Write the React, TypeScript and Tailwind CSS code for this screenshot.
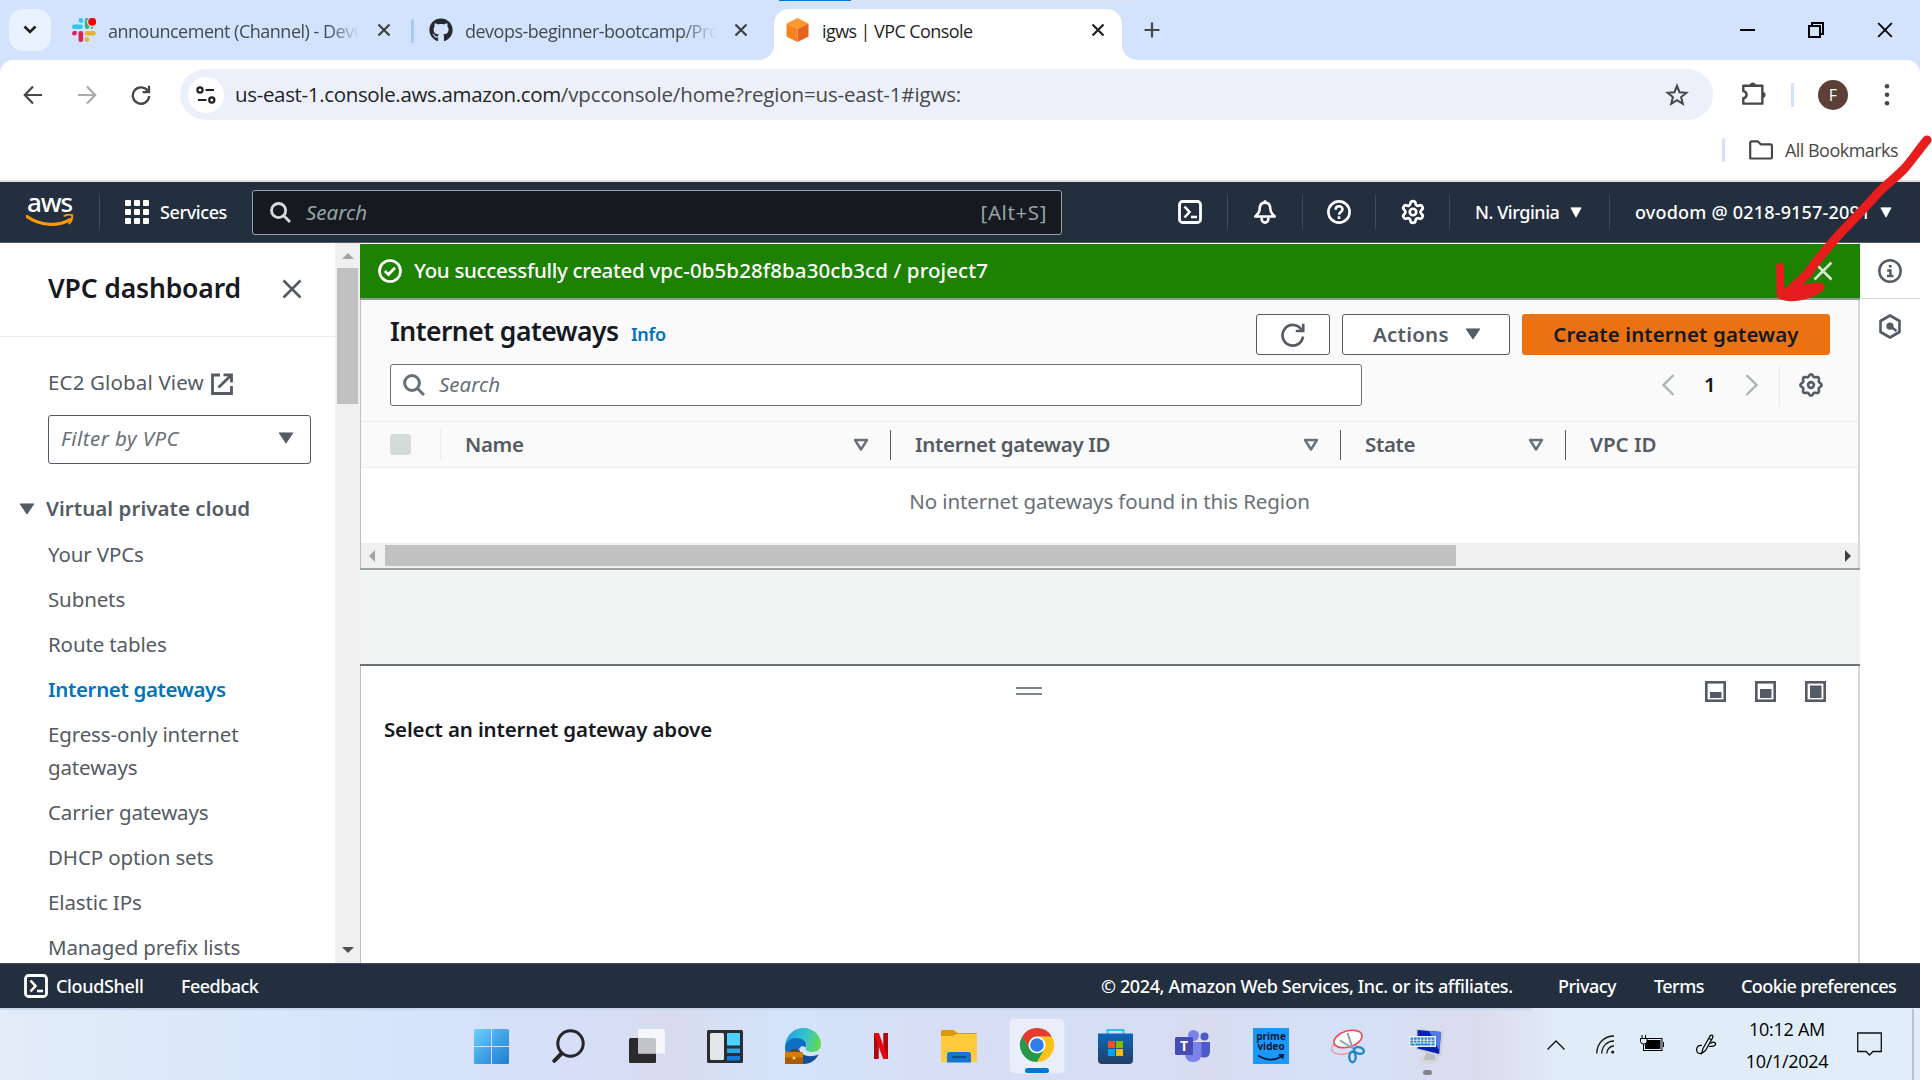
import React from "react";
import type { ReactNode } from "react";
import { FaGithub } from "react-icons/fa";
import { Settings } from "lucide-react";

/* ---------- small helpers ---------- */

function T({ c = "", children }: { c?: string; children: ReactNode }) {
  return <span className={"block shrink-0 whitespace-nowrap " + c}>{children}</span>;
}

function Caret({ c }: { c: string }) {
  return (
    <svg viewBox="0 0 16 13" className={"block shrink-0 " + c} preserveAspectRatio="none">
      <path d="M1.2 1h13.6L8 12z" fill="currentColor" stroke="currentColor" strokeWidth="1" strokeLinejoin="round" />
    </svg>
  );
}

function SortCaret() {
  return (
    <svg viewBox="0 0 16 14" className="h-[14px] w-4 shrink-0 text-[#687078]">
      <path d="M2 2h12L8 11.5z" fill="none" stroke="currentColor" strokeWidth="2.4" strokeLinejoin="round" />
    </svg>
  );
}

function Cross({ c, w = 2 }: { c: string; w?: number }) {
  return (
    <svg viewBox="0 0 20 20" className={"block shrink-0 " + c}>
      <path d="M1.5 1.5l17 17M18.5 1.5l-17 17" stroke="currentColor" strokeWidth={w} fill="none" />
    </svg>
  );
}

function Magnifier({ c }: { c: string }) {
  return (
    <svg viewBox="0 0 22 22" className={"block shrink-0 " + c}>
      <circle cx="9" cy="9" r="7.4" fill="none" stroke="currentColor" strokeWidth="3" />
      <path d="M14.5 14.5l6.5 6.5" stroke="currentColor" strokeWidth="3" />
    </svg>
  );
}

function ShellIcon() {
  return (
    <svg viewBox="0 0 24 24" className="block h-6 w-6 shrink-0 text-white" fill="none" stroke="currentColor">
      <rect x="1.5" y="1.5" width="21" height="21" rx="3" strokeWidth="2.8" />
      <path d="M6.5 6.5l5 5.5-5 5.5" strokeWidth="2.6" />
      <path d="M13 17h6" strokeWidth="2.6" />
    </svg>
  );
}

/* Eight-lobed preferences gear */
const GEAR_PATH =
  Array.from({ length: 96 }, (_, i) => {
    const a = (i / 96) * Math.PI * 2;
    const r = 9.5 + 1.1 * Math.cos(8 * a);
    return `${i ? "L" : "M"}${(12 + r * Math.cos(a)).toFixed(2)} ${(12 + r * Math.sin(a)).toFixed(2)}`;
  }).join("") + "Z";

function Gear({ c }: { c: string }) {
  return (
    <svg viewBox="0 0 24 24" className={"block h-6 w-6 shrink-0 " + c} fill="none" stroke="currentColor" strokeWidth="2.6" strokeLinejoin="round">
      <path d={GEAR_PATH} />
      <circle cx="12" cy="12" r="2.9" />
    </svg>
  );
}

/* ---------- browser chrome ---------- */

function SlackIcon() {
  return (
    <svg viewBox="0 0 24 24" className="block h-6 w-6 shrink-0">
      <g fill="#36c5f0">
        <rect x="0" y="6.5" width="11" height="4.6" rx="2.3" />
        <path d="M6.5 2.4a2.3 2.3 0 0 1 4.6 0v2.3H8.8a2.3 2.3 0 0 1-2.3-2.3z" />
      </g>
      <g fill="#2eb67d">
        <rect x="12.8" y="0" width="4.6" height="11" rx="2.3" />
        <path d="M19 11a2.3 2.3 0 1 0 0-4.6h0v4.6z" />
      </g>
      <g fill="#ecb22e">
        <rect x="12.8" y="13" width="11" height="4.6" rx="2.3" />
        <path d="M12.8 19.3h2.3a2.3 2.3 0 1 1-2.3 2.3z" />
      </g>
      <g fill="#e01e5a">
        <rect x="6.5" y="13" width="4.6" height="11" rx="2.3" />
        <path d="M4.7 13v2.3A2.3 2.3 0 1 1 2.4 13z" />
      </g>
      <circle cx="20" cy="4" r="5" fill="#d3e2fd" />
      <circle cx="20.2" cy="3.8" r="4" fill="#f70000" />
    </svg>
  );
}

function CubeIcon() {
  return (
    <svg viewBox="0 0 23 24" className="block h-6 w-[23px] shrink-0">
      <path d="M11.5 0L22.5 5.5 11.5 11 .5 5.5z" fill="#fd9a2b" />
      <path d="M.5 5.5l11 5.5v13L.5 18.5z" fill="#f6821f" />
      <path d="M22.5 5.5l-11 5.5v13l11-5.5z" fill="#ea6220" />
    </svg>
  );
}

function TabClose({ c }: { c: string }) {
  return (
    <svg viewBox="0 0 14 14" className={"block h-[14px] w-[14px] shrink-0 " + c}>
      <path d="M1.5 1.5l11 11M12.5 1.5l-11 11" stroke="currentColor" strokeWidth="2.2" />
    </svg>
  );
}

function TabStrip() {
  return (
    <div className="flex h-[60px] flex-col bg-[#d3e2fd] font-['Open_Sans',sans-serif]">
      <div className="flex h-px pl-[779px]">
        <div className="w-[72px] bg-[#0078d7]" />
        <div className="w-[290px] bg-[#e0e3e8]" />
      </div>
      <div className="flex h-[59px] pt-2">
        <div className="ml-[9px] flex h-[42px] w-[42px] items-center justify-center rounded-[14px] bg-[#e9f0fe]">
          <svg viewBox="0 0 14 10" className="h-[10px] w-[14px]">
            <path d="M1.5 1.5L7 7l5.5-5.5" fill="none" stroke="#1f1f1f" strokeWidth="2.6" />
          </svg>
        </div>
        <div className="ml-[21px] flex h-[42px] w-[320px] items-center">
          <SlackIcon />
          <div className="ml-3 w-[251px] overflow-hidden [mask-image:linear-gradient(to_right,#000_88%,transparent)]">
            <T c="text-[18px] tracking-[-0.5px] text-[#45494f] pt-[3px]">announcement (Channel) - DevOps</T>
          </div>
          <TabClose c="ml-[18px] text-[#3c4043]" />
        </div>
        <div className="ml-[19px] mt-[10px] h-6 w-[3px] rounded bg-[#a8c7fa]" />
        <div className="ml-[15px] flex h-[42px] w-[330px] items-center">
          <FaGithub className="h-6 w-6 shrink-0 text-[#24292f]" />
          <div className="ml-3 w-[251px] overflow-hidden [mask-image:linear-gradient(to_right,#000_86%,transparent)]">
            <T c="text-[18px] tracking-[-0.5px] text-[#45494f] pt-[3px]">devops-beginner-bootcamp/Project</T>
          </div>
          <TabClose c="ml-[18px] text-[#3c4043]" />
        </div>
        <div className="flex h-[51px] w-[15px] items-end bg-white">
          <div className="h-[51px] w-[15px] rounded-br-[15px] bg-[#d3e2fd]" />
        </div>
        <div className="flex h-[51px] w-[348px] rounded-t-[15px] bg-white pb-[9px] pl-[12px]">
          <div className="flex flex-1 items-center">
            <CubeIcon />
            <T c="ml-[13px] w-[269px] pt-[3px] text-[18px] tracking-[-0.58px] text-[#1f1f1f]">igws | VPC Console</T>
            <TabClose c="text-[#1f1f1f]" />
          </div>
        </div>
        <div className="h-[51px] w-[15px] bg-white">
          <div className="h-[51px] w-[15px] rounded-bl-[15px] bg-[#d3e2fd]" />
        </div>
        <div className="flex h-[42px] flex-1 items-center">
          <svg viewBox="0 0 16 16" className="ml-[7px] h-4 w-4">
            <path d="M8 .5v15M.5 8h15" stroke="#474747" strokeWidth="2.2" />
          </svg>
          <div className="ml-auto mr-[27px] flex items-center text-black">
            <div className="h-[2px] w-[15px] bg-black" />
            <svg viewBox="0 0 16 16" className="ml-[53px] h-4 w-4" fill="none" stroke="currentColor" strokeWidth="2">
              <path d="M4 3.5V1h11v11h-3" />
              <path d="M1 4h11v11H1z" />
            </svg>
            <Cross c="ml-[53px] h-4 w-4" w={2.3} />
          </div>
        </div>
      </div>
    </div>
  );
}

function Toolbar() {
  return (
    <div className="bg-[#d3e2fd]">
      <div className="flex h-[69px] items-center rounded-t-[13px] bg-white font-['Open_Sans',sans-serif]">
        <svg viewBox="0 0 20 20" className="ml-[23px] h-5 w-5" fill="none" stroke="#474747" strokeWidth="2.2">
          <path d="M10 1.5L1.8 10l8.2 8.5M1.8 10H19" />
        </svg>
        <svg viewBox="0 0 20 20" className="ml-[34px] h-5 w-5" fill="none" stroke="#ababab" strokeWidth="2.2">
          <path d="M10 1.5l8.2 8.5-8.2 8.5M18.2 10H1" />
        </svg>
        <svg viewBox="0 0 20 20" className="ml-[34px] h-5 w-5" fill="none" stroke="#474747" strokeWidth="2.3">
          <path d="M17 6.2A8.2 8.2 0 1 0 18.2 11" />
          <path d="M18 .8v6.4h-6.4" />
        </svg>
        <div className="ml-[29px] flex h-[51px] w-[1533px] items-center rounded-full bg-[#ecf0fa]">
          <div className="ml-2 flex h-9 w-9 items-center justify-center rounded-full bg-white">
            <svg viewBox="0 0 20 18" className="h-[18px] w-5" fill="none" stroke="#1f1f1f" strokeWidth="2.2">
              <circle cx="4" cy="4" r="2.6" />
              <path d="M9.5 4H18M2 14h8.5" />
              <circle cx="15.8" cy="14" r="2.6" />
            </svg>
          </div>
          <T c="ml-[11px] text-[20.5px] tracking-[-0.24px] text-[#474747]">
            <span className="tracking-[-0.34px] text-[#1f1f1f]">us-east-1.console.aws.amazon.com</span>
            <span className="tracking-[-0.15px]">/vpcconsole/home?region=us-east-1#igws:</span>
          </T>
          <svg viewBox="0 0 24 24" className="ml-auto mr-6 h-6 w-6" fill="none" stroke="#474747" strokeWidth="2">
            <path d="M12 2.8l2.5 6.4 6.9.5-5.3 4.4 1.7 6.7L12 17.1l-5.8 3.7 1.7-6.7-5.3-4.4 6.9-.5z" />
          </svg>
        </div>
        <svg viewBox="0 0 24 24" className="ml-[28px] h-[25px] w-[25px]" fill="none" stroke="#474747" strokeWidth="2.3" strokeLinejoin="round">
          <path d="M2.2 3.6H20.5V20.8H2.2v-5.2c4.2-.6 4.2-6.2 0-6.8z" />
          <path d="M9 3.2a2.3 2.3 0 0 1 4.6 0zM20.8 10a2.3 2.3 0 0 1 0 4.6z" fill="#474747" strokeWidth="1" />
        </svg>
        <div className="ml-[25px] h-6 w-[3px] bg-[#d3e2fd]" />
        <div className="ml-6 flex h-[30px] w-[30px] items-center justify-center rounded-full bg-[#5c4037] text-[16px] text-white">F</div>
        <svg viewBox="0 0 6 24" className="ml-9 h-6 w-[6px]" fill="#474747">
          <circle cx="3" cy="3.2" r="2.3" />
          <circle cx="3" cy="11.8" r="2.3" />
          <circle cx="3" cy="20.2" r="2.3" />
        </svg>
      </div>
    </div>
  );
}

function BookmarkBar() {
  return (
    <div className="flex h-[51px] items-center bg-white pb-[9px] font-['Open_Sans',sans-serif]">
      <div className="ml-[1722px] h-6 w-[3px] rounded bg-[#d3e2fd]" />
      <svg viewBox="0 0 24 20" className="ml-6 h-5 w-6" fill="none" stroke="#474747" strokeWidth="2.2" strokeLinejoin="round">
        <path d="M1.2 18.5V2.8a1.5 1.5 0 0 1 1.5-1.5h6l3 3h9.8a1.5 1.5 0 0 1 1.5 1.5v11.2a1.5 1.5 0 0 1-1.5 1.5z" />
      </svg>
      <T c="ml-3 text-[18px] tracking-[-0.53px] text-[#474747]">All Bookmarks</T>
    </div>
  );
}

/* ---------- AWS header ---------- */

function Sep() {
  return <div className="h-[34px] w-px shrink-0 bg-[#414d5c]" />;
}

function AwsHeader() {
  return (
    <div className="flex h-[61px] items-center border-b border-[#545b64] bg-[#232f3e] text-[18px] font-medium text-white">
      <div className="ml-[25px] flex h-8 w-[49px] flex-col items-center">
        <T c="h-[18px] text-[26px] font-medium leading-[12px] tracking-[-1.2px]">aws</T>
        <svg viewBox="0 0 48 13" className="block h-[13px] w-12 shrink-0">
          <path d="M1 2.5C14 12 32 12.6 44 5.6" fill="none" stroke="#ff9900" strokeWidth="3.2" strokeLinecap="round" />
          <path d="M38.5 1.8c3-1.4 6.4-1.2 7.8-.4 0 3-.8 6-3.2 8" fill="none" stroke="#ff9900" strokeWidth="2" strokeLinecap="round" />
        </svg>
      </div>
      <div className="ml-[25px]"><Sep /></div>
      <div className="ml-[25px] grid grid-cols-3 gap-[3px]">
        {[0, 1, 2, 3, 4, 5, 6, 7, 8].map((i) => (
          <div key={i} className="h-[6px] w-[6px] rounded-[1px] bg-white" />
        ))}
      </div>
      <T c="ml-[11px] w-[92px] tracking-[-0.4px]">Services</T>
      <div className="flex h-[45px] w-[810px] items-center rounded-[3px] border border-[#95a5a6] bg-[#16191f] text-[20.5px] font-normal text-[#95a5a6]">
        <Magnifier c="ml-[17px] h-[21px] w-[21px] text-[#d5dbdb]" />
        <T c="ml-[15px] italic">Search</T>
        <T c="ml-auto mr-[14px] tracking-[0.6px]">[Alt+S]</T>
      </div>
      <div className="ml-[116px]"><ShellIcon /></div>
      <div className="ml-[25px]"><Sep /></div>
      <svg viewBox="0 0 24 24" className="ml-[25px] h-6 w-6" fill="none" stroke="currentColor" strokeWidth="2.6">
        <path d="M12 2.6C7.6 2.6 6.6 6 6.6 9.5c0 3-1.700 4.600-4.300 7h19.400c-2.600-2.400-4.300-4-4.300-7 0-3.500-1-6.900-5.400-6.900z" strokeLinejoin="round" />
        <path d="M12 .3v3M8.700 17.500v1.800a3.300 3.300 0 0 0 6.600 0v-1.800" />
      </svg>
      <div className="ml-[25px]"><Sep /></div>
      <svg viewBox="0 0 24 24" className="ml-6 h-6 w-6" fill="none" stroke="currentColor" strokeWidth="2.600">
        <circle cx="12" cy="12" r="10.600" />
        <path d="M8.600 9.800c0-4.600 6.900-4.500 6.900-.5 0 2.700-3.500 2.600-3.500 5.500M12 16.200v2.800" />
      </svg>
      <div className="ml-6"><Sep /></div>
      <Settings className="ml-6 h-[26px] w-[26px] shrink-0" strokeWidth={2.5} />
      <div className="ml-[23px]"><Sep /></div>
      <T c="ml-[25px] w-[95px] tracking-[-0.45px]">N. Virginia</T>
      <Caret c="h-[11px] w-3" />
      <div className="ml-[27px]"><Sep /></div>
      <T c="ml-[25px] w-[245px] tracking-[0.2px]">ovodom @ 0218-9157-2091</T>
      <Caret c="h-[11px] w-3" />
    </div>
  );
}

/* ---------- VPC sidebar ---------- */

const NAV = [
  "Your VPCs",
  "Subnets",
  "Route tables",
  "Internet gateways",
  "Egress-only internet gateways",
  "Carrier gateways",
  "DHCP option sets",
  "Elastic IPs",
  "Managed prefix lists",
];

function Sidebar() {
  return (
    <div className="flex w-[360px] shrink-0">
      <div className="w-[335px] overflow-hidden bg-white text-[20.5px] leading-[33px] tracking-[-0.13px] text-[#545b64]">
        <div className="flex h-[94px] items-center border-b border-[#eaeded] pb-[2px] pl-12">
          <T c="w-[234px] text-[26.5px] font-semibold tracking-[-0.15px] text-[#16191f]">VPC dashboard</T>
          <Cross c="h-5 w-5 text-[#545b64]" w={2.6} />
        </div>
        <div className="mt-[29px] flex items-center pl-12">
          <T c="w-[163px] tracking-[0.15px]">EC2 Global View</T>
          <svg viewBox="0 0 22 22" className="mt-[2px] h-[22px] w-[22px]" fill="none" stroke="currentColor" strokeWidth="2.8">
            <path d="M9 2H1.5v18.5H20.5V13M12.5 1.8h8V9.500M20.500 1.800L7.500 14.500" />
          </svg>
        </div>
        <div className="ml-12 mt-4 flex h-[49px] w-[263px] items-center justify-between rounded-[3px] border border-[#545b64] pb-[3px] pl-3 pr-[16px]">
          <T c="italic tracking-[0.45px] text-[#687078]">Filter by VPC</T>
          <Caret c="h-3 w-4 text-[#545b64]" />
        </div>
        <div className="mt-7 flex items-center">
          <Caret c="ml-[19px] h-3 w-4" />
          <T c="ml-[11px] font-semibold tracking-[0.05px]">Virtual private cloud</T>
        </div>
        <nav className="mt-[13px] flex w-[250px] flex-col gap-3 pl-12">
          {NAV.map((n) => (
            <a
              key={n}
              className={
                n === "Internet gateways"
                  ? "whitespace-nowrap font-semibold tracking-[-0.35px] text-[#0073bb]"
                  : "block"
              }
            >
              {n}
            </a>
          ))}
        </nav>
      </div>
      <div className="flex w-[25px] flex-col items-center bg-[#f0f0f0]">
        <svg viewBox="0 0 12 6" className="mt-[10px] h-[6px] w-3 shrink-0"><path d="M0 6l6-6 6 6z" fill="#a3a3a3" /></svg>
        <div className="mr-px mt-[9px] h-[136px] w-[21px] shrink-0 bg-[#c1c1c1]" />
        <svg viewBox="0 0 12 6" className="mb-[10px] mt-auto h-[6px] w-3 shrink-0"><path d="M0 0l6 6 6-6z" fill="#505050" /></svg>
      </div>
    </div>
  );
}

/* ---------- Main panel ---------- */

function ColHead({ w, label }: { w: string; label: string }) {
  return (
    <div className={"flex shrink-0 items-center pl-6 " + w}>
      <T c="font-semibold tracking-[-0.33px]">{label}</T>
      <div className="ml-auto flex items-center">
        <SortCaret />
        <div className="ml-[21px] h-[30px] w-px bg-[#545b64]" />
      </div>
    </div>
  );
}

function PanelIcon({ level }: { level: number }) {
  return (
    <svg viewBox="0 0 21 21" className="block h-[21px] w-[21px]">
      <rect x="1.3" y="1.3" width="18.4" height="18.4" fill="none" stroke="#545b64" strokeWidth="2.6" />
      {level === 0 && <rect x="5" y="11" width="11.5" height="6" fill="#545b64" />}
      {level === 1 && <rect x="5" y="8" width="11.5" height="9" fill="#545b64" />}
      {level === 2 && <rect x="5" y="4.5" width="11.5" height="12.5" fill="#545b64" />}
    </svg>
  );
}

function Gateways() {
  return (
    <div className="flex w-[1500px] shrink-0 flex-col border-r-2 border-[#d3dada] bg-white text-[20.5px] text-[#545b64]">
      <div className="mr-[-2px] mt-px flex h-[56px] shrink-0 items-center border-b-2 border-[#8f9a9b] bg-[#1d8102] text-white">
        <svg viewBox="0 0 24 24" className="ml-[18px] h-6 w-6" fill="none" stroke="currentColor" strokeWidth="2.7">
          <circle cx="12" cy="12" r="10.5" />
          <path d="M6.8 12l3.7 3.5 6.5-6.8" />
        </svg>
        <T c="ml-3 pb-px font-medium">
          <span className="tracking-[-0.31px]">You successfully created </span>
          <span className="tracking-[0.09px]">vpc-0b5b28f8ba30cb3cd / project7</span>
        </T>
        <Cross c="ml-auto mr-[27px] h-5 w-5 text-[#d8e6d2]" w={2.6} />
      </div>
      <div className="flex min-h-0 flex-1 flex-col border-l border-[#b9c1c2]">
        <div className="flex h-[121px] shrink-0 flex-col bg-[#fafafa] pl-[29px]">
          <div className="flex pt-[14px]">
            <div className="flex h-[35px] items-center">
              <T c="w-[241px] text-[26.5px] font-semibold tracking-[-0.52px] text-[#16191f]">Internet gateways</T>
              <T c="mt-[6px] text-[18px] font-semibold tracking-[-0.3px] text-[#0073bb]">Info</T>
            </div>
            <div className="ml-auto mr-[28px] flex gap-3">
              <div className="flex h-[41px] w-[74px] items-center justify-center rounded-[3px] border border-[#545b64] bg-white">
                <svg viewBox="0 0 24 24" className="h-6 w-6" fill="none" stroke="currentColor" strokeWidth="2.7">
                  <path d="M20.5 6.8A10.3 10.3 0 1 0 22 13.5" />
                  <path d="M22.2 .8v7.2h-7.4" />
                </svg>
              </div>
              <div className="flex h-[41px] w-[168px] items-center rounded-[3px] border border-[#545b64] bg-white pb-px pl-[30px]">
                <T c="w-[92px] font-semibold tracking-[0.25px]">Actions</T>
                <Caret c="h-3 w-4" />
              </div>
              <div className="flex h-[41px] w-[308px] items-center justify-center rounded-[3px] bg-[#ec7211] pb-px text-[#16191f]">
                <T c="font-semibold tracking-[0.1px]">Create internet gateway</T>
              </div>
            </div>
          </div>
          <div className="mt-[9px] flex h-[42px] items-center">
            <div className="flex h-[42px] w-[972px] items-center rounded-[3px] border border-[#687078] bg-white text-[#687078]">
              <Magnifier c="ml-3 h-[22px] w-[22px]" />
              <T c="ml-[14px] pb-px italic">Search</T>
            </div>
            <svg viewBox="0 0 13 22" className="ml-[299px] h-[22px] w-[14px]" fill="none" stroke="#aab7b8" strokeWidth="2.4">
              <path d="M12 1L2 11l10 10" />
            </svg>
            <T c="ml-[29px] w-[41px] pb-[2px] font-semibold text-[#16191f]">1</T>
            <svg viewBox="0 0 13 22" className="h-[22px] w-[14px]" fill="none" stroke="#aab7b8" strokeWidth="2.4">
              <path d="M1 1l10 10L1 21" />
            </svg>
            <div className="ml-[20px] h-[41px] w-px bg-[#eaeded]" />
            <Gear c="ml-[19px]" />
          </div>
        </div>
        <div className="flex h-[47px] shrink-0 items-center overflow-hidden border-y border-[#eaeded] bg-[#fafafa]">
          <div className="ml-[29px] h-[21px] w-[21px] shrink-0 rounded-[3px] bg-[#d5dbdb]" />
          <div className="ml-[29px] h-[30px] w-px shrink-0 bg-[#eaeded]" />
          <ColHead w="w-[450px]" label="Name" />
          <ColHead w="w-[450px]" label="Internet gateway ID" />
          <ColHead w="w-[225px]" label="State" />
          <T c="ml-6 font-semibold tracking-0">VPC ID</T>
        </div>
        <div className="flex h-[75px] shrink-0 items-center justify-center pb-[8px] text-[#687078]">
          <T c="tracking-[-0.12px]">No internet gateways found in this Region</T>
        </div>
        <div className="flex h-[25px] shrink-0 items-center bg-[#f0f0f0]">
          <svg viewBox="0 0 6 12" className="ml-2 h-3 w-[6px]"><path d="M6 0L0 6l6 6z" fill="#a3a3a3" /></svg>
          <div className="ml-[10px] h-[21px] w-[1071px] bg-[#c1c1c1]" />
          <svg viewBox="0 0 6 12" className="ml-auto mr-[7px] h-3 w-[6px]"><path d="M0 0l6 6-6 6z" fill="#404040" /></svg>
        </div>
        <div className="ml-[-1px] mr-[-2px] h-[98px] shrink-0 border-b-2 border-t-2 border-b-[#687078] border-t-[#98a4a5] bg-[#f2f3f3]" />
        <div className="flex h-[51px] shrink-0 items-center pb-px">
          <div className="ml-[655px] h-2 w-[26px] border-y-2 border-[#7d8689]" />
          <div className="ml-auto mr-[32px] mt-[3px] flex gap-[29px] pb-[12px] pt-[9px]">
            <PanelIcon level={0} />
            <PanelIcon level={1} />
            <PanelIcon level={2} />
          </div>
        </div>
        <T c="ml-[23px] mt-[-3px] font-semibold tracking-[-0.15px] text-[#16191f]">Select an internet gateway above</T>
      </div>
    </div>
  );
}

function RightRail() {
  return (
    <div className="flex w-[60px] shrink-0 flex-col items-center bg-white text-[#545b64]">
      <div className="flex h-[56px] w-full items-center justify-center border-b border-[#d5dbdb]">
        <svg viewBox="0 0 24 24" className="h-6 w-6" fill="none" stroke="currentColor">
          <circle cx="12" cy="12" r="10.7" strokeWidth="2.5" />
          <path d="M10.8 7.3h2.800M9.200 11.500h3.200v5M9 17h6.500" strokeWidth="2.5" />
        </svg>
      </div>
      <svg viewBox="0 0 22 25" className="mt-[15px] h-[25px] w-[22px]" fill="none" stroke="currentColor">
        <path d="M11 1.5l9.500 5.500v11L11 23.500 1.500 18V7z" strokeWidth="2.6" strokeLinejoin="round" />
        <circle cx="11" cy="12.2" r="3.6" fill="currentColor" stroke="none" />
        <path d="M11 12l6.500 5" strokeWidth="2.6" />
      </svg>
    </div>
  );
}

function Footer() {
  return (
    <div className="flex h-[45px] items-center border-t border-[#414d5c] bg-[#232f3e] text-[18px] font-medium text-white">
      <div className="ml-6"><ShellIcon /></div>
      <T c="ml-2 w-[125px] tracking-[-0.35px]">CloudShell</T>
      <T c="w-[920px] tracking-[-0.55px]">Feedback</T>
      <T c="w-[457px] tracking-[-0.37px]">© 2024, Amazon Web Services, Inc. or its affiliates.</T>
      <T c="w-[96px] tracking-[-0.5px]">Privacy</T>
      <T c="w-[87px] tracking-[-0.55px]">Terms</T>
      <T c="tracking-[-0.58px]">Cookie preferences</T>
    </div>
  );
}

/* ---------- Windows taskbar ---------- */

function WindowsIcon() {
  return (
    <svg viewBox="0 0 35 35" className="h-[35px] w-[35px]">
      <defs>
        <linearGradient id="win" x1="0" y1="0" x2="1" y2="1">
          <stop offset="0" stopColor="#6fd0fd" />
          <stop offset=".55" stopColor="#3f9fe3" />
          <stop offset="1" stopColor="#1f7fd0" />
        </linearGradient>
      </defs>
      <path d="M0 1.500Q0 0 1.500 0H17v17H0zM18 0h15.500Q35 0 35 1.500V17H18zM0 18h17v17H1.500Q0 35 0 33.500zM18 18h17v15.500q0 1.500-1.500 1.500H18z" fill="url(#win)" />
    </svg>
  );
}

function SearchTask() {
  return (
    <svg viewBox="0 0 34 34" className="h-[34px] w-[34px]" fill="none" stroke="#26262a">
      <circle cx="18.5" cy="14.5" r="12.7" strokeWidth="3" />
      <path d="M9.5 24.5L2.3 31.8" strokeWidth="4" strokeLinecap="round" />
    </svg>
  );
}

function TaskView() {
  return (
    <svg viewBox="0 0 36 34" className="h-[34px] w-9">
      <rect x="0" y="9" width="27" height="25" rx="1.5" fill="#2b2b2d" />
      <rect x="9" y="0" width="27" height="24.5" rx="1" fill="#f7f8fa" fillOpacity=".95" />
      <path d="M9 9h16q2 0 2 2v13.500H9z" fill="#c3c4c6" />
    </svg>
  );
}

function Widgets() {
  return (
    <svg viewBox="0 0 36 33" className="h-[33px] w-9">
      <rect width="36" height="33" rx="1.5" fill="#2a2d31" />
      <rect x="3" y="3" width="14" height="27" rx="1.5" fill="#e3e7ea" />
      <rect x="20" y="3" width="13" height="12.5" rx=".8" fill="#4cd2ff" />
      <rect x="20" y="18.5" width="13" height="4.5" fill="#28a8e8" />
      <rect x="20" y="26" width="13" height="4.5" fill="#0f7ad8" />
    </svg>
  );
}

function EdgeIcon() {
  return (
    <svg viewBox="0 0 36 36" className="h-9 w-9">
      <defs>
        <linearGradient id="e1" x1="0" y1=".3" x2="1" y2=".5">
          <stop offset="0" stopColor="#1f9fe0" />
          <stop offset=".55" stopColor="#35c3cc" />
          <stop offset="1" stopColor="#62d94e" />
        </linearGradient>
      </defs>
      <path d="M0 18C1 7 9 0 18.500 0 29 0 36 8 36 16c0 5-3.500 8-8.500 8-4 0-7-1.500-7-3 0-1 1.500-1.500 1.500-4 0-3-3-5-7-5C8 12 2 14 0 18z" fill="url(#e1)" />
      <path d="M0 19C1 13 7 9.500 13 10.200c5.500.6 8.500 3.800 8.500 6.800 0 1.500-1 2.500-1 2.500-4-3.500-8 1-6.500 6 1.500 4.500 6 6 11 6.500-3 3-12 5-18 .5C2 29 0 25 0 19z" fill="#0f6fc4" />
      <path d="M14 21c1.500 6 10 9.500 19.500 5.500C31 32 25.500 36 19 36c-6-1-7.500-8-5-15z" fill="#114f98" />
      <path d="M7 24v-2h5v2" fill="none" stroke="#6b3d05" strokeWidth="1.5" />
      <rect x="0" y="24" width="18" height="12" rx=".6" fill="#d37d08" />
      <rect x="0" y="29.5" width="18" height="6.5" fill="#aa5b04" />
      <rect x="7.7" y="28.8" width="2.6" height="2.6" fill="#ffd75a" />
    </svg>
  );
}

function NetflixIcon() {
  return (
    <svg viewBox="0 0 14 26" className="h-[26px] w-[14px]">
      <rect x="0" y="0" width="4.7" height="26" fill="#b1060f" />
      <rect x="9.3" y="0" width="4.7" height="26" fill="#b1060f" />
      <path d="M2.3 0L11.7 26" stroke="#e50914" strokeWidth="4.8" />
    </svg>
  );
}

function FolderIcon() {
  return (
    <svg viewBox="0 0 36 33" className="h-[33px] w-9">
      <path d="M0 1.500Q0 0 1.500 0h11l4 3H34.500Q36 3 36 4.500V12H0z" fill="#dd9b0c" />
      <path d="M0 6h12l3.500-2H36v28H0z" fill="#ffcb3d" />
      <path d="M6 32.500V25q0-3 3-3h18q3 0 3 3v7.500z" fill="#1377cf" />
      <path d="M11 27h14" stroke="#0a4a8c" strokeWidth="1.8" />
    </svg>
  );
}

function ChromeIcon() {
  return (
    <svg viewBox="0 0 36 36" className="h-9 w-9">
      <path d="M33.600 9A18 18 0 0 1 18 36l7.800-13.500L18 9z" fill="#fbc116" />
      <path d="M2.400 9A18 18 0 0 0 18 36l7.800-13.500H10.200z" fill="#279847" />
      <path d="M10.200 22.500L2.400 9A18 18 0 0 1 33.600 9H18z" fill="#e33b2e" />
      <path d="M2.400 9l7.800 13.500L14 27 8 32A18 18 0 0 1 2.400 9z" fill="#279847" />
      <circle cx="18" cy="18" r="9" fill="#fff" />
      <circle cx="18" cy="18" r="7.2" fill="#2f7de9" />
    </svg>
  );
}

function StoreIcon() {
  return (
    <svg viewBox="0 0 35 35" className="h-[35px] w-[35px]">
      <defs>
        <linearGradient id="st" x1="0" y1="0" x2="0" y2="1">
          <stop offset="0" stopColor="#0d68ba" />
          <stop offset="1" stopColor="#233e63" />
        </linearGradient>
      </defs>
      <path d="M9.500 6V1h16v5" fill="none" stroke="#27c1f4" strokeWidth="2" />
      <path d="M0 4.500h35V31q0 4-4 4H4q-4 0-4-4z" fill="url(#st)" />
      <rect x="10" y="12" width="7" height="7" fill="#f25022" />
      <rect x="18" y="12" width="7" height="7" fill="#7fba00" />
      <rect x="10" y="20" width="7" height="7" fill="#00a4ef" />
      <rect x="18" y="20" width="7" height="7" fill="#ffb900" />
    </svg>
  );
}

function TeamsIcon() {
  return (
    <svg viewBox="0 0 36 32" className="h-8 w-9">
      <circle cx="29.5" cy="6.5" r="4" fill="#5059c9" />
      <path d="M24 12h11v9.500q0 6-6 6-5 0-5-6z" fill="#5059c9" />
      <circle cx="18.5" cy="5.5" r="5.5" fill="#7b83eb" />
      <path d="M10 12h16.500v11q0 9-8.500 9-8 0-8-9z" fill="#7b83eb" />
      <rect x="0" y="7" width="18" height="18" rx="1.5" fill="#464bb6" />
      <text x="9" y="21" textAnchor="middle" fontSize="14" fontWeight="700" fill="#fff" className="font-['Open_Sans',sans-serif]">T</text>
    </svg>
  );
}

function PrimeIcon() {
  return (
    <div className="flex h-9 w-9 flex-col items-center bg-[#1a98ff] pt-[3px] text-[10px] font-bold leading-[10px] text-[#06182b]">
      <T>prime</T>
      <T>video</T>
      <svg viewBox="0 0 28 7" className="mt-[3px] h-[7px] w-7 shrink-0" fill="none" stroke="#06182b" strokeWidth="1.7">
        <path d="M1 1.500c8 5 17 5 24 .8M21.500.8h4.800l-1 4" />
      </svg>
    </div>
  );
}

function SnipIcon() {
  return (
    <svg viewBox="0 0 36 36" className="h-9 w-9" fill="none">
      <ellipse cx="13" cy="19" rx="12.5" ry="7" stroke="#ef8f93" strokeWidth="1.2" transform="rotate(-12 13 19)" />
      <ellipse cx="17" cy="11" rx="14.5" ry="8" fill="#fbfcfd" stroke="#e84b50" strokeWidth="1.6" transform="rotate(-17 17 11)" />
      <path d="M16.500 5l5 15M9 12.500L23 21" stroke="#969ca3" strokeWidth="2" />
      <ellipse cx="28" cy="22.5" rx="5" ry="3.2" stroke="#1d87c9" strokeWidth="2.4" transform="rotate(15 28 22.5)" />
      <ellipse cx="21.5" cy="29" rx="3.2" ry="5.2" stroke="#1d87c9" strokeWidth="2.4" />
    </svg>
  );
}

function OskIcon() {
  return (
    <svg viewBox="0 0 36 36" className="h-9 w-9">
      <ellipse cx="20" cy="31.5" rx="10" ry="4" fill="#d4d6d8" />
      <path d="M17 24l9 2v6H15z" fill="#b9bcc0" />
      <path d="M7 .5L35 3 32.500 29 7 22z" fill="#cfd3d8" />
      <path d="M8.500 2L32 4 30.200 26 8.500 20.500z" fill="#0b1fb5" />
      <path d="M20 3L32 4 30.500 23z" fill="#4f7bea" />
      <path d="M0 8h27v11H0z" fill="#e8f4fb" />
      <path d="M1.500 9.500h24v8h-24z" fill="#2c83c4" />
      <path d="M1.500 12.200h24M1.500 15h24M4.500 9.500v5.500M8 9.500v5.500M11.500 9.500v5.500M15 9.500v5.500M18.500 9.500v5.500M22 9.500v8M6 15v2.500" stroke="#e8f4fb" strokeWidth=".9" />
    </svg>
  );
}

function Slot({ children }: { children: ReactNode }) {
  return <div className="flex h-[70px] w-[78px] shrink-0 items-center justify-center">{children}</div>;
}

function Taskbar() {
  return (
    <div className="flex h-[72px] w-[1920px] items-stretch bg-[linear-gradient(90deg,#e3edf8_0%,#d5e4fb_21%,#d6def6_31%,#d8dbee_35%,#d3e4fa_41%,#d6dff6_47%,#d6def6_56%,#d7dcf0_63%,#d5e1f8_70%,#dadcee_77%,#e0ebf8_81%,#e1edf9_100%)] font-['Open_Sans',sans-serif] text-black">
      <div className="flex w-[1532px] border-t-2 border-[#c5d2e6]/80 pl-[452px] pt-px">
        <Slot><WindowsIcon /></Slot>
        <Slot><SearchTask /></Slot>
        <Slot><TaskView /></Slot>
        <Slot><Widgets /></Slot>
        <Slot><EdgeIcon /></Slot>
        <Slot><NetflixIcon /></Slot>
        <Slot><FolderIcon /></Slot>
        <Slot>
          <div className="flex h-14 w-14 flex-col items-center rounded-[5px] border border-[#dde2ef] bg-[#eaeef9] pt-[9px]">
            <ChromeIcon />
            <div className="mt-[6px] h-[5px] w-6 shrink-0 rounded-full bg-[#0078d4]" />
          </div>
        </Slot>
        <Slot><StoreIcon /></Slot>
        <Slot><TeamsIcon /></Slot>
        <Slot><PrimeIcon /></Slot>
        <Slot><SnipIcon /></Slot>
        <Slot>
          <div className="flex flex-col items-center pt-[10px]">
            <OskIcon />
            <div className="mt-[6px] h-[5px] w-[9px] rounded-full bg-[#7f848c]" />
          </div>
        </Slot>
      </div>
      <div className="flex flex-1 items-center pt-px">
        <svg viewBox="0 0 18 10" className="ml-[15px] h-[10px] w-[18px]" fill="none" stroke="#111" strokeWidth="1.4">
          <path d="M.5 9.500L9 1l8.500 8.500" />
        </svg>
        <svg viewBox="0 0 19 19" className="ml-[31px] h-[19px] w-[19px]" fill="none" stroke="#111" strokeWidth="1.3">
          <path d="M.8 18.500C.8 8.500 8 1 18 1M5.800 18.500C5.800 11.500 11 6 18 6M10.800 18.500c0-4 3-7.500 7.200-7.500" />
          <circle cx="16.7" cy="17" r="1.5" fill="#111" stroke="none" />
        </svg>
        <svg viewBox="0 0 24 18" className="mb-[3px] ml-[25px] h-[18px] w-6" fill="none" stroke="#000" strokeWidth="1">
          <rect x="3.5" y="4.5" width="18.5" height="12" />
          <rect x="5.5" y="6.5" width="14.5" height="8" fill="#000" />
          <path d="M23.500 8v5" />
          <path d="M.5 4.500h6.500v3q0 2.500-3.200 2.500T.5 7.500z" fill="#e1edf9" />
          <path d="M2 1v3.500M5.500 1v3.500M3.500 10v6.500" />
        </svg>
        <svg viewBox="0 0 21 21" className="mb-px ml-8 h-[21px] w-[21px]" fill="none" stroke="#000" strokeWidth="1.2">
          <path d="M5.500 19.500L7 14.500 14 2q1.500-1.800 3 0L16.500 4 9.500 16.500zM13 4.500l3 1.500" />
          <path d="M6 11.500c-5-1-6.500 4-4.500 7 1 1.500 3.500 1 4 .5M14.500 9.500c3-2.500 5.500-1 5 1s-4 2-6.500 2" />
        </svg>
        <div className="ml-7 flex w-[84px] flex-col items-center text-[18px] leading-8 tracking-[-0.28px]">
          <T>10:12 AM</T>
          <T>10/1/2024</T>
        </div>
        <svg viewBox="0 0 25 25" className="ml-7 h-[25px] w-[25px]" fill="none" stroke="#111" strokeWidth="1.3">
          <path d="M.7 1h23.600v18.500H16L12.500 23 9 19.500H.7z" />
        </svg>
        <div className="ml-auto mr-[6px] h-full w-[2px] bg-[#b5c3d0]" />
      </div>
    </div>
  );
}

/* Hand-drawn red arrow pointing at the create button */
function Annotation() {
  return (
    <svg viewBox="0 0 172 180" className="pointer-events-none absolute left-[1760px] top-[130px] h-[180px] w-[172px]" fill="none" stroke="#e71d1d" strokeLinecap="round" strokeLinejoin="round">
      <path d="M167 10C157 22 150 33 143 40 134 49 125 56 118 63 105 78 88 95 76 108 64 122 54 134 48 143 40 152 32 156 28 164" strokeWidth="9" />
      <path d="M20 137C20 148 20 158 21 165" strokeWidth="8" />
      <path d="M21 165C30 170 50 166 60 158" strokeWidth="8" />
      <path d="M24 163L34 160 60 157" strokeWidth="9" />
    </svg>
  );
}

export default function App() {
  return (
    <div className="relative h-[1080px] w-[1932px] overflow-hidden bg-white font-['Noto_Sans',sans-serif]">
      <div className="flex h-[1080px] w-[1920px] flex-col">
        <TabStrip />
        <Toolbar />
        <BookmarkBar />
        <div className="h-[2px] shrink-0 bg-[#dedede]" />
        <AwsHeader />
        <div className="flex h-[720px] overflow-hidden">
          <Sidebar />
          <Gateways />
          <RightRail />
        </div>
        <Footer />
        <Taskbar />
      </div>
      <Annotation />
    </div>
  );
}
